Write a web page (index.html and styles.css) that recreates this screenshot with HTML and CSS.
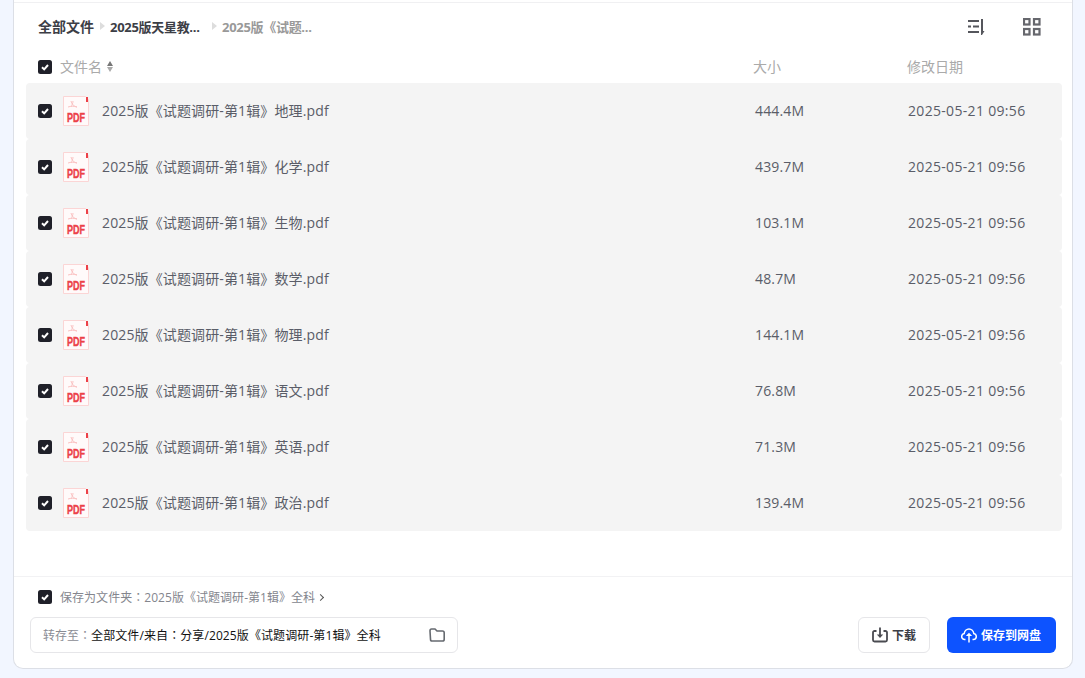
FILE: index.html
```html
<!DOCTYPE html>
<html>
  <head>
    <meta charset="utf-8">
    <title>保存到网盘</title>
    <link rel="stylesheet" href="styles.css">
  </head>
  <body>
    <svg class="defs">
      <symbol id="check" viewBox="0 0 14 14">
        <rect width="14" height="14" rx="2.5" fill="#1f2029"/>
        <path d="M4 7.2l2.2 2.2L10 5" fill="none" stroke="#fff" stroke-width="2"/>
      </symbol>
      <symbol id="pdf" viewBox="0 0 26 30">
        <path d="M.5.5h22l3 3v26H.5z" fill="#fffafa" stroke="#fbd5d5"/>
        <rect x="23" y="1" width="2" height="5" fill="#ec4048"/>
        <path d="M8 5c1 3 2 5 6 6M8 11c1-2 2-4 2-6M5 11c3-1 6-1 9 0" fill="none" stroke="#fbc2c2" stroke-width="1"/>
        <text x="4" y="26" class="pdf-label" textLength="18" lengthAdjust="spacingAndGlyphs">PDF</text>
      </symbol>
    </svg>
    <div class="card">
      <div class="topline"></div>
      <div class="toolbar">
        <div class="crumbs">
          <span class="crumb">全部文件</span>
          <span class="arrow"></span>
          <span class="crumb crumb-mid">2025版天星教...</span>
          <span class="arrow"></span>
          <span class="crumb crumb-last">2025版《试题...</span>
        </div>
        <div class="tools">
          <svg width="20" height="18" viewBox="0 0 20 18" fill="none" stroke="#55565c" stroke-width="2">
            <path d="M1 3h11M1 8.500h3M6 8.500h6M1 14h11M15 1v14"/>
            <path d="M14 13h3.500L15 17h-1z" fill="#55565c" stroke="none"/>
          </svg>
          <svg width="18" height="18" viewBox="0 0 18 18" fill="none" stroke="#66676d" stroke-width="2.200">
            <rect x="1" y="1" width="5.500" height="5.500"/>
            <rect x="11" y="1" width="5.500" height="5.500"/>
            <rect x="1" y="11" width="5.500" height="5.500"/>
            <rect x="11" y="11" width="5.500" height="5.500"/>
          </svg>
        </div>
      </div>
      <div class="list-head">
        <svg class="box"><use href="#check"/></svg>
        <span class="head-name">文件名</span>
        <span class="sorter"><i class="up"></i><i class="down"></i></span>
        <span class="head-size">大小</span>
        <span class="head-date">修改日期</span>
      </div>
      <div class="list">
        <div class="row">
          <svg class="box"><use href="#check"/></svg>
          <svg class="file-icon"><use href="#pdf"/></svg>
          <span class="name">2025版《试题调研-第1辑》地理.pdf</span>
          <span class="size">444.4M</span>
          <span class="date">2025-05-21 09:56</span>
        </div>
        <div class="row">
          <svg class="box"><use href="#check"/></svg>
          <svg class="file-icon"><use href="#pdf"/></svg>
          <span class="name">2025版《试题调研-第1辑》化学.pdf</span>
          <span class="size">439.7M</span>
          <span class="date">2025-05-21 09:56</span>
        </div>
        <div class="row">
          <svg class="box"><use href="#check"/></svg>
          <svg class="file-icon"><use href="#pdf"/></svg>
          <span class="name">2025版《试题调研-第1辑》生物.pdf</span>
          <span class="size">103.1M</span>
          <span class="date">2025-05-21 09:56</span>
        </div>
        <div class="row">
          <svg class="box"><use href="#check"/></svg>
          <svg class="file-icon"><use href="#pdf"/></svg>
          <span class="name">2025版《试题调研-第1辑》数学.pdf</span>
          <span class="size">48.7M</span>
          <span class="date">2025-05-21 09:56</span>
        </div>
        <div class="row">
          <svg class="box"><use href="#check"/></svg>
          <svg class="file-icon"><use href="#pdf"/></svg>
          <span class="name">2025版《试题调研-第1辑》物理.pdf</span>
          <span class="size">144.1M</span>
          <span class="date">2025-05-21 09:56</span>
        </div>
        <div class="row">
          <svg class="box"><use href="#check"/></svg>
          <svg class="file-icon"><use href="#pdf"/></svg>
          <span class="name">2025版《试题调研-第1辑》语文.pdf</span>
          <span class="size">76.8M</span>
          <span class="date">2025-05-21 09:56</span>
        </div>
        <div class="row">
          <svg class="box"><use href="#check"/></svg>
          <svg class="file-icon"><use href="#pdf"/></svg>
          <span class="name">2025版《试题调研-第1辑》英语.pdf</span>
          <span class="size">71.3M</span>
          <span class="date">2025-05-21 09:56</span>
        </div>
        <div class="row">
          <svg class="box"><use href="#check"/></svg>
          <svg class="file-icon"><use href="#pdf"/></svg>
          <span class="name">2025版《试题调研-第1辑》政治.pdf</span>
          <span class="size">139.4M</span>
          <span class="date">2025-05-21 09:56</span>
        </div>
      </div>
      <div class="footer">
        <div class="save-as">
          <svg class="box"><use href="#check"/></svg>
          <span class="save-text">保存为文件夹<span class="colon">：</span>2025版《试题调研-第1辑》全科</span>
          <span class="chev"></span>
        </div>
        <div class="actions">
          <div class="path">
            <span class="path-label">转存至<span class="colon">：</span></span>
            <span class="path-value">全部文件/来自<span class="colon">：</span>分享/2025版《试题调研-第1辑》全科</span>
            <svg class="folder" width="16" height="14" viewBox="0 0 16 14" fill="none" stroke="#666a70" stroke-width="1.600">
              <path d="M1 3c0-1 .5-2 1.500-2h3.500l2 2h5.500c1 0 1.700.7 1.700 1.700v6.500c0 1-.7 1.800-1.700 1.800h-10.500c-1 0-1.500-.8-1.500-1.800z"/>
            </svg>
          </div>
          <button class="btn btn-down">
            <svg width="16" height="16" viewBox="0 0 16 16" fill="none" stroke="#4a4b51" stroke-width="1.800">
              <path d="M4.500 4h-2c-.8 0-1.500.7-1.500 1.500v7.500c0 .8.700 1.500 1.500 1.500h11c.8 0 1.500-.7 1.500-1.500v-7.500c0-.8-.7-1.500-1.500-1.500h-2"/>
              <path d="M8 .5v8"/>
              <path d="M4.800 7.500h6.400l-3.200 3.500z" fill="#4a4b51" stroke="none"/>
            </svg>
            下载
          </button>
          <button class="btn btn-save">
            <svg width="16" height="16" viewBox="0 0 16 16" fill="none" stroke="#fff" stroke-width="1.500">
              <path d="M4.500 12.500h-.8c-1.700 0-3-1.300-3-3 0-1.500 1-2.700 2.500-3 .3-2.500 2.400-4.500 4.800-4.500s4.500 2 4.800 4.500c1.500.3 2.500 1.500 2.500 3 0 1.700-1.300 3-3 3h-.8"/>
              <path d="M8 15.500v-8"/>
              <path d="M4.800 9l3.200-3.200 3.200 3.200z" fill="#fff" stroke="none"/>
            </svg>
            保存到网盘
          </button>
        </div>
      </div>
    </div>
  </body>
</html>
```

FILE: styles.css
```css
body {
  margin: 0;
  height: 678px;
  overflow: hidden;
  background: #f2f6ff;
  font-family: "Open Sans", "Noto Sans CJK SC", sans-serif;
  color: #5a5d68;
}
.defs {
  display: none;
}
.colon {
  font-family: "Noto Sans CJK TC", sans-serif;
}
.card {
  display: flex;
  flex-direction: column;
  box-sizing: border-box;
  width: 1060px;
  height: 669px;
  margin-left: 13px;
  background: #fff;
  border: 1px solid #dcdfe6;
  border-top: 0;
  border-radius: 0 0 10px 10px;
}
.topline {
  height: 2px;
  border-bottom: 1px solid #f0f0f2;
}
.toolbar {
  display: flex;
  align-items: center;
  justify-content: space-between;
  height: 48px;
  padding: 0 31px 0 24px;
}
.crumbs {
  display: flex;
  align-items: center;
  padding-bottom: 2px;
  font-size: 14px;
  font-weight: 700;
  color: #3c3e46;
}
.crumb-mid {
  width: 96px;
  font-size: 13px;
  letter-spacing: -.3px;
}
.crumb-last {
  font-size: 13px;
  letter-spacing: -.3px;
  color: #999;
}
.arrow {
  width: 0;
  height: 0;
  margin: 0 5px 0 6px;
  border-left: 5px solid #ddd;
  border-top: 4px solid transparent;
  border-bottom: 4px solid transparent;
}
.tools {
  display: flex;
  align-items: center;
  gap: 36px;
}
.list-head {
  display: flex;
  align-items: center;
  height: 32px;
  padding-left: 24px;
  font-size: 14px;
  color: #aaa;
}
.list-head span {
  padding-bottom: 2px;
}
.box {
  flex: none;
  width: 14px;
  height: 14px;
}
.head-name {
  margin-left: 8px;
}
.sorter {
  display: flex;
  flex-direction: column;
  gap: 1px;
  margin-left: 5px;
}
.sorter i {
  width: 0;
  height: 0;
  border-left: 3.500px solid transparent;
  border-right: 3.500px solid transparent;
}
.sorter .up {
  border-bottom: 5px solid #777;
}
.sorter .down {
  border-top: 5px solid #aaa;
}
.head-size {
  margin-left: 640px;
  width: 154px;
}
.list {
  margin: 0 10px 0 12px;
}
.row {
  display: flex;
  align-items: center;
  height: 56px;
  padding-left: 12px;
  font-size: 14px;
  background: #f4f4f4;
  border-radius: 4px;
}
.row span {
  padding-bottom: 2px;
}
.file-icon {
  flex: none;
  width: 26px;
  height: 30px;
  margin: 0 13px 0 11px;
}
.pdf-label {
  font-family: "Liberation Sans", sans-serif;
  font-size: 12.500px;
  font-weight: 700;
  fill: #ec4048;
  stroke: #ec4048;
  stroke-width: .4px;
}
.name {
  width: 653px;
  letter-spacing: .13px;
}
.size {
  width: 153px;
  letter-spacing: .15px;
}
.date {
  letter-spacing: .32px;
}
.footer {
  margin-top: auto;
  padding: 0 16px 15px;
  border-top: 1px solid #f2f2f4;
}
.save-as {
  display: flex;
  align-items: center;
  height: 40px;
  padding-left: 8px;
  font-size: 12px;
  color: #84868e;
}
.save-text {
  margin-left: 8px;
  letter-spacing: .04px;
}
.chev {
  width: 4px;
  height: 4px;
  margin-left: 3px;
  border-top: 1px solid #555;
  border-right: 1px solid #555;
  transform: rotate(45deg);
}
.actions {
  display: flex;
  align-items: center;
  height: 36px;
}
.path {
  display: flex;
  align-items: center;
  box-sizing: border-box;
  width: 428px;
  height: 36px;
  padding: 0 12px;
  font-size: 12px;
  border: 1px solid #e6e6e9;
  border-radius: 6px;
}
.path-label {
  color: #8a8c94;
}
.path-value {
  color: #111;
  letter-spacing: .1px;
}
.folder {
  margin-left: auto;
}
.btn {
  display: flex;
  align-items: center;
  justify-content: center;
  gap: 4px;
  box-sizing: border-box;
  height: 36px;
  font-family: inherit;
  font-size: 12px;
  font-weight: 700;
  border-radius: 6px;
}
.btn-down {
  width: 72px;
  margin-left: auto;
  color: #3c3e46;
  background: #fff;
  border: 1px solid #e6e6e9;
}
.btn-save {
  justify-content: flex-start;
  width: 109px;
  margin-left: 17px;
  padding: 0 0 0 14px;
  color: #fff;
  background: #0d53ff;
  border: 0;
}
```
